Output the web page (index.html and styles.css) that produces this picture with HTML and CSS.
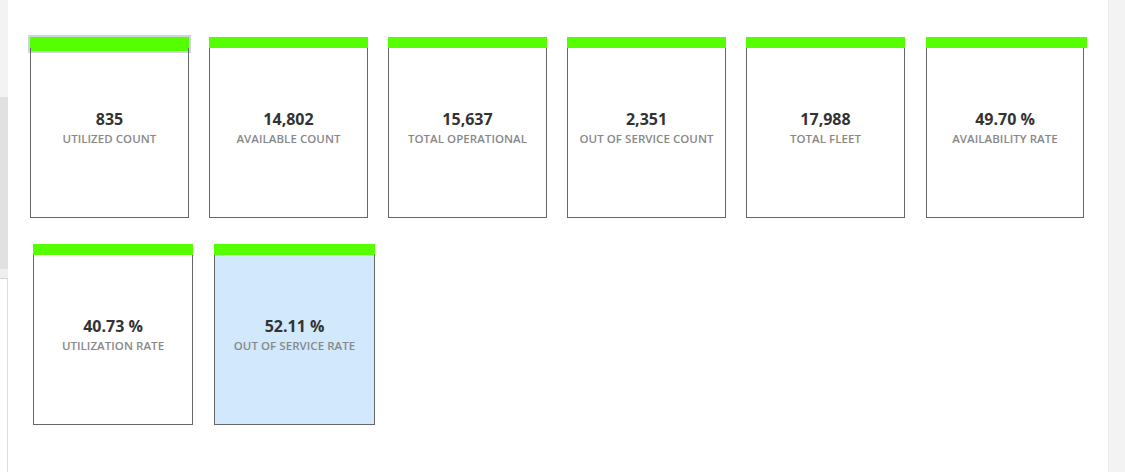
FILE: index.html
```html
<!DOCTYPE html>
<html>
<head>
<meta charset="utf-8">
<link rel="stylesheet" href="styles.css">
</head>
<body>
<div class="page">
  <div class="left-rail">
    <div class="rail-top"></div>
    <div class="rail-mid"></div>
    <div class="rail-band"></div>
    <div class="rail-rest"></div>
  </div>
  <main class="dash">
    <div class="row row-one">
      <div class="card selected">
        <div class="bar"></div>
        <div class="body"><div class="value">835</div><div class="label">UTILIZED COUNT</div></div>
      </div>
      <div class="card">
        <div class="bar"></div>
        <div class="body"><div class="value">14,802</div><div class="label">AVAILABLE COUNT</div></div>
      </div>
      <div class="card">
        <div class="bar"></div>
        <div class="body"><div class="value">15,637</div><div class="label">TOTAL OPERATIONAL</div></div>
      </div>
      <div class="card">
        <div class="bar"></div>
        <div class="body"><div class="value">2,351</div><div class="label">OUT OF SERVICE COUNT</div></div>
      </div>
      <div class="card">
        <div class="bar"></div>
        <div class="body"><div class="value">17,988</div><div class="label">TOTAL FLEET</div></div>
      </div>
      <div class="card wide-bar">
        <div class="bar"></div>
        <div class="body"><div class="value">49.70 %</div><div class="label">AVAILABILITY RATE</div></div>
      </div>
    </div>
    <div class="row row-two">
      <div class="card">
        <div class="bar"></div>
        <div class="body"><div class="value">40.73 %</div><div class="label">UTILIZATION RATE</div></div>
      </div>
      <div class="card highlight">
        <div class="bar"></div>
        <div class="body"><div class="value">52.11 %</div><div class="label">OUT OF SERVICE RATE</div></div>
      </div>
    </div>
  </main>
  <div class="right-rail"></div>
</div>
</body>
</html>
```
FILE: styles.css
```css
html, body {
  margin: 0;
  padding: 0;
  background: #ffffff;
  height: 100%;
}
.page {
  display: flex;
  width: 1125px;
  height: 472px;
  font-family: "Open Sans", "Liberation Sans", sans-serif;
}
.left-rail {
  width: 8px;
  flex: none;
  display: flex;
  flex-direction: column;
}
.rail-top { height: 97px; background: #f3f3f3; }
.rail-mid { height: 172px; background: #e1e1e1; }
.rail-band { height: 9px; background: #efefef; border-bottom: 1px solid #d4d4d4; }
.rail-rest { flex: 1; border-right: 1px solid #dcdcdc; }
.dash {
  flex: 1;
  padding: 37px 0 0 22px;
  display: flex;
  flex-direction: column;
  gap: 26px;
}
.row {
  display: flex;
  gap: 20px;
}
.row-one .card:last-child {
  margin-left: 1px;
  width: 158px;
}
.row-two {
  padding-left: 3px;
  gap: 21px;
}
.card {
  width: 159px;
  height: 181px;
  display: flex;
  flex-direction: column;
}
.row-two .card { width: 160px; }
.row-two .card.highlight { width: 161px; }
.bar {
  height: 11px;
  background: #55ff00;
  flex: none;
}
.card.selected .bar {
  height: 14px;
  margin-bottom: -3px;
  box-shadow: 0 0 0 2px #ccd6de;
}
.card.wide-bar .bar {
  margin-right: -3px;
}
.body {
  flex: 1;
  border: 1px solid #666666;
  border-top: none;
  display: flex;
  flex-direction: column;
  align-items: center;
  justify-content: center;
  padding-bottom: 9px;
}
.card.highlight .body {
  background: #d1e8fd;
}
.value {
  font-size: 16px;
  font-weight: 700;
  color: #333333;
  line-height: 20px;
}
.label {
  font-size: 11.5px;
  font-weight: 600;
  color: #888888;
  line-height: 16px;
  margin-top: 2px;
  letter-spacing: 0.05px;
}
.right-rail {
  width: 16px;
  flex: none;
  background: #f3f3f3;
  border-left: 1px solid #ececec;
}
```
